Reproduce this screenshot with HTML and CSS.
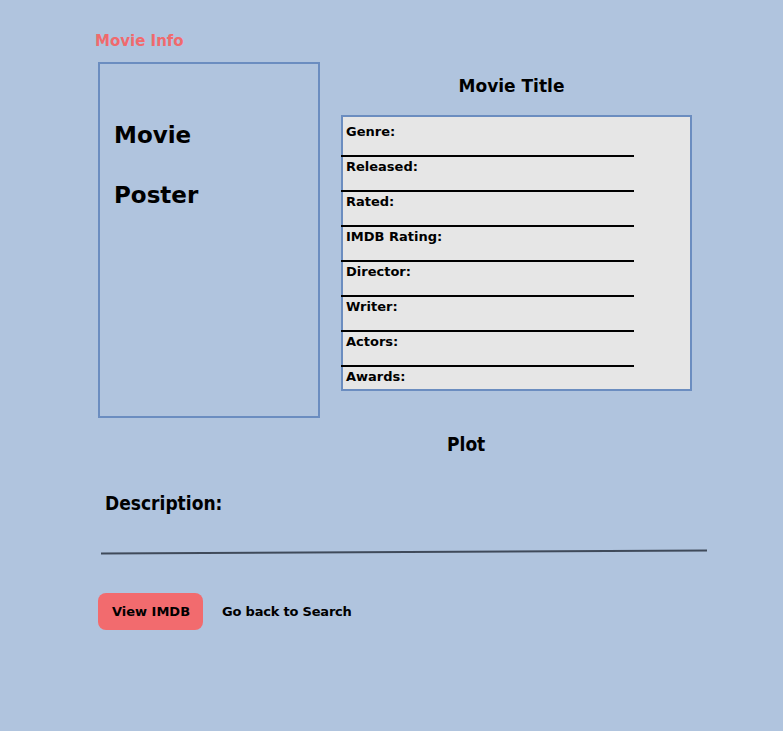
FILE: index.html
```html
<!DOCTYPE html>
<html>
<head>
<meta charset="utf-8">
<link rel="stylesheet" href="styles.css">
</head>
<body>
<div class="page">
  <div class="brand">Movie Info</div>
  <div class="main">
    <div class="poster">
      <div class="poster-text">Movie</div>
      <div class="poster-text">Poster</div>
    </div>
    <div class="details">
      <h1 class="title">Movie Title</h1>
      <div class="info">
        <div class="row">Genre:</div>
        <div class="row">Released:</div>
        <div class="row">Rated:</div>
        <div class="row">IMDB Rating:</div>
        <div class="row">Director:</div>
        <div class="row">Writer:</div>
        <div class="row">Actors:</div>
        <div class="row last">Awards:</div>
      </div>
    </div>
  </div>
  <h2 class="plot">Plot</h2>
  <div class="desc">Description:</div>
  <div class="rule"></div>
  <div class="actions">
    <button class="btn">View IMDB</button>
    <a class="back">Go back to Search</a>
  </div>
</div>
</body>
</html>
```
FILE: styles.css
```css
html, body {
  margin: 0;
  padding: 0;
  background: #b0c4de;
  height: 100%;
}
body {
  font-family: "DejaVu Sans", Verdana, sans-serif;
  color: #000;
}
.page {
  padding: 32px 0 0 95px;
}
.brand {
  font-size: 15px;
  line-height: 18px;
  font-weight: bold;
  color: #f06a6d;
}
.main {
  display: flex;
  align-items: flex-start;
  margin-top: 12px;
  margin-left: 3px;
}
.poster {
  box-sizing: border-box;
  width: 222px;
  height: 356px;
  border: 2px solid #6b8dc0;
  padding: 41px 0 0 14px;
}
.poster-text {
  font-size: 23px;
  line-height: 60px;
  font-weight: bold;
}
.details {
  margin-left: 21px;
  width: 351px;
}
.title {
  margin: 14px 0 0 0;
  padding-right: 10px;
  font-size: 17px;
  line-height: 20px;
  font-weight: bold;
  text-align: center;
}
.info {
  box-sizing: border-box;
  margin-top: 19px;
  width: 351px;
  height: 276px;
  background: #e6e6e6;
  border: 2px solid #6b8dc0;
  padding-top: 5px;
}
.row {
  box-sizing: border-box;
  width: 293px;
  height: 35px;
  margin-left: -2px;
  padding-left: 5px;
  padding-top: 2px;
  border-bottom: 2px solid #000;
  font-size: 13px;
  line-height: 16px;
  font-weight: bold;
}
.row.last {
  border-bottom: none;
  height: 20px;
}
.plot {
  margin: 15px 0 0 0;
  padding-left: 352px;
  font-family: "DejaVu Sans Condensed", "DejaVu Sans", sans-serif;
  font-size: 19px;
  line-height: 22px;
  font-weight: bold;
}
.desc {
  margin-top: 37px;
  margin-left: 10px;
  font-family: "DejaVu Sans Condensed", "DejaVu Sans", sans-serif;
  font-size: 19px;
  line-height: 22px;
  font-weight: bold;
}
.rule {
  margin-top: 37px;
  margin-left: 6px;
  width: 606px;
  height: 2px;
  background: #3f4a5a;
  transform: rotate(-0.28deg);
}
.actions {
  display: flex;
  align-items: center;
  margin-top: 40px;
  margin-left: 3px;
}
.btn {
  box-sizing: border-box;
  width: 105px;
  height: 37px;
  border: none;
  border-radius: 8px;
  background: #f26b6e;
  font-family: "DejaVu Sans", Verdana, sans-serif;
  font-size: 13px;
  font-weight: bold;
  color: #000;
  padding: 0 0 0 1px;
}
.back {
  margin-left: 19px;
  font-size: 13px;
  font-weight: bold;
  color: #000;
  letter-spacing: -0.2px;
}
```
